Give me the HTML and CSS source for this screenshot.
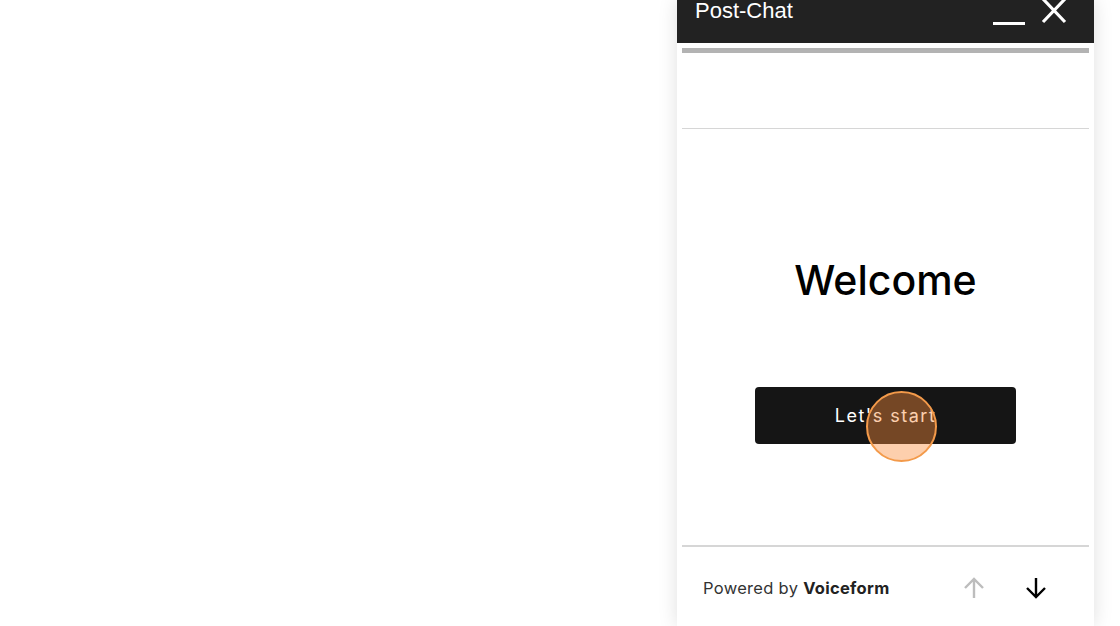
FILE: index.html
```html
<!DOCTYPE html>
<html lang="en">
<head>
    <meta charset="UTF-8">
    <meta name="viewport" content="width=device-width, initial-scale=1.0">
    <title>Post-Chat</title>
    <link rel="stylesheet" href="styles.css">
</head>
<body>
    <div class="widget">
        <div class="header">
            <span class="title">Post-Chat</span>
            <div class="controls">
                <span class="minimize"></span>
                <svg class="close" width="26" height="24" viewBox="0 0 26 24">
                    <path d="M2 -1 L24 22 M24 -1 L2 22" stroke="#fff" stroke-width="3.2" fill="none"/>
                </svg>
            </div>
        </div>

        <div class="body">
            <div class="progress"></div>
            <div class="spacer"></div>

            <div class="main">
                <h1>Welcome</h1>
                <div class="btn-wrap">
                    <button class="start">Let's start</button>
                    <span class="click"></span>
                </div>
            </div>

            <div class="footer">
                <span class="powered">Powered by <strong>Voiceform</strong></span>
                <div class="nav">
                    <svg width="24" height="24" viewBox="0 0 24 24">
                        <path d="M12 22 V3 M3 12 L12 3 L21 12" stroke="#bdbdbd" stroke-width="2.4" fill="none"/>
                    </svg>
                    <svg width="24" height="24" viewBox="0 0 24 24">
                        <path d="M12 2 V21 M3 12 L12 21 L21 12" stroke="#000" stroke-width="2.4" fill="none"/>
                    </svg>
                </div>
            </div>
        </div>
    </div>
</body>
</html>
```

FILE: styles.css
```css
body {
    margin: 0;
    background: white;
    display: flex;
    justify-content: flex-end;
    height: 626px;
    overflow: hidden;
}
.widget {
    width: 417px;
    margin-right: 26px;
    height: 626px;
    overflow: hidden;
    background: white;
    box-shadow: 0 0 18px rgba(0,0,0,0.13);
}
.header {
    height: 43px;
    background: #222;
    display: flex;
    justify-content: space-between;
    padding-left: 18px;
    padding-right: 27px;
    box-sizing: border-box;
}
.title {
    font-family: "Liberation Sans", Arial, sans-serif;
    font-size: 22px;
    line-height: 22px;
    color: white;
}
.controls {
    display: flex;
    align-items: flex-start;
    gap: 16px;
}
.minimize {
    display: block;
    width: 32px;
    height: 3px;
    background: white;
    margin-top: 22px;
}
.close {
    display: block;
}
.body {
    padding: 5px 5px 0;
}
.progress {
    height: 5px;
    background: #b3b3b3;
}
.spacer {
    height: 75px;
    border-bottom: 1px solid #d6d6d6;
}
.main {
    height: 418px;
    padding-top: 126px;
    box-sizing: border-box;
    border-bottom: 2px solid #d6d6d6;
    display: flex;
    flex-direction: column;
    align-items: center;
}
h1 {
    margin: 0;
    font-family: Inter, sans-serif;
    font-weight: 500;
    font-size: 41px;
    line-height: 50px;
    color: #000;
}
.btn-wrap {
    position: relative;
    margin-top: 82px;
}
.start {
    display: block;
    width: 261px;
    height: 57px;
    border: none;
    border-radius: 4px;
    background: #151515;
    color: white;
    font-family: Inter, sans-serif;
    font-size: 18px;
    letter-spacing: 1.5px;
    cursor: pointer;
}
.click {
    position: absolute;
    left: 111px;
    top: 4px;
    width: 67px;
    height: 67px;
    border-radius: 50%;
    border: 2px solid #f39a4a;
    background: rgba(250, 140, 60, 0.42);
}
.footer {
    height: 78px;
    padding-top: 4px;
    box-sizing: border-box;
    display: flex;
    align-items: center;
    justify-content: space-between;
    padding-left: 21px;
    padding-right: 41px;
}
.powered {
    font-family: Inter, sans-serif;
    font-size: 16.5px;
    color: #333;
    letter-spacing: 0.3px;
}
.powered strong {
    color: #222;
    font-weight: 700;
}
.nav {
    display: flex;
    gap: 38px;
}
.nav svg {
    display: block;
}
```
